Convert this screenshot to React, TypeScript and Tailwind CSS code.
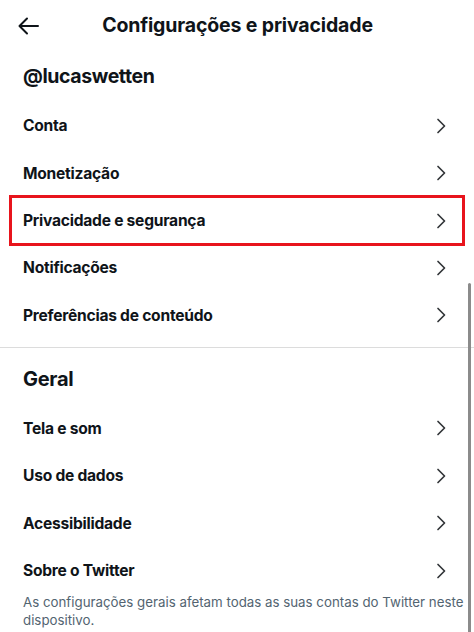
import React from "react";

const Chevron = () => (
  <svg width="10" height="16" viewBox="0 0 10 16" fill="none" className="shrink-0">
    <path d="M2 1.5 L8.5 8 L2 14.5" stroke="#333639" strokeWidth="1.7" strokeLinecap="round" strokeLinejoin="round" />
  </svg>
);

const label = "text-[15.6px] font-bold text-[#0f1419] tracking-[-0.25px]";

const Row = ({ text, className = "" }: { text: string; className?: string }) => (
  <div className={`flex items-center justify-between h-[47.5px] pl-[23px] pr-[28px] ${className}`}>
    <span className={label}>{text}</span>
    <Chevron />
  </div>
);

export default function App() {
  return (
    <div className="relative w-[474px] h-[632px] overflow-hidden bg-white" style={{ fontFamily: "Inter, 'Noto Sans', sans-serif" }}>
      <div className="flex items-center h-[52px] px-[18px]">
        <svg width="21" height="18" viewBox="0 0 21 18" fill="none">
          <path d="M20 9 H2 M9 1.5 L1.5 9 L9 16.5" stroke="#0f1419" strokeWidth="2" strokeLinecap="round" strokeLinejoin="round" />
        </svg>
        <h1 className="flex-1 text-center text-[19.5px] font-bold text-[#0f1419] pr-[20px] tracking-[-0.15px]">Configurações e privacidade</h1>
      </div>
      <div className="h-[50px] flex items-center pl-[23px]">
        <span className="text-[19.5px] font-bold text-[#0f1419] tracking-[-0.4px]">@lucaswetten</span>
      </div>
      <Row text="Conta" />
      <Row text="Monetização" />
      <div className="-mt-[2px] mx-[9px] border-[3px] border-[#e8141c] h-[51px] flex items-center justify-between pl-[11px] pr-[16px]">
        <span className={label}>Privacidade e segurança</span>
        <Chevron />
      </div>
      <Row text="Notificações" className="-mt-[2px]" />
      <Row text="Preferências de conteúdo" />
      <div className="mt-[7.5px] border-t border-[#dcdcdc]" />
      <div className="h-[57px] flex items-center pl-[23px] pt-[5px]">
        <span className="text-[20px] font-bold text-[#0f1419] tracking-[-0.3px]">Geral</span>
      </div>
      <Row text="Tela e som" />
      <Row text="Uso de dados" />
      <Row text="Acessibilidade" />
      <Row text="Sobre o Twitter" />
      <p className="-mt-[2px] pl-[23px] pr-[10px] text-[13.3px] leading-[18px] text-[#536471]">
        As configurações gerais afetam todas as suas contas do Twitter neste dispositivo.
      </p>
      <div className="absolute right-[3px] top-[283px] bottom-0 w-[3px] bg-[#8b8b8b] rounded-t-sm" />
    </div>
  );
}
